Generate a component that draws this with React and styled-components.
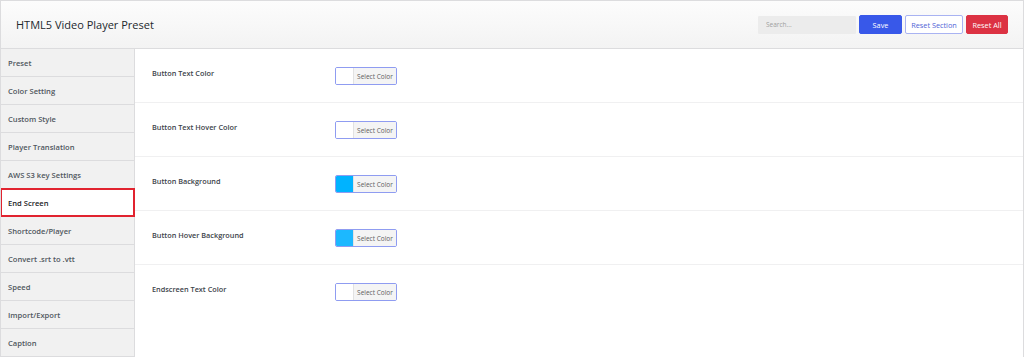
import React from 'react';
import styled, { createGlobalStyle } from 'styled-components';

const GlobalStyle = createGlobalStyle`
  html, body {
    margin: 0;
    padding: 0;
    background: #fff;
  }
  body {
    font-family: 'Open Sans', 'Noto Sans', sans-serif;
    color: #333;
  }
`;

const Frame = styled.div`
  width: 1024px;
  height: 357px;
  box-sizing: border-box;
  border: 1px solid #dcdcde;
  border-bottom: none;
  overflow: hidden;
  display: flex;
  flex-direction: column;
`;

const Header = styled.header`
  height: 47px;
  flex-shrink: 0;
  display: flex;
  align-items: center;
  justify-content: space-between;
  padding: 0 15px 0 15px;
  background: linear-gradient(#fcfcfc, #f3f3f3);
  border-bottom: 1px solid #dcdcde;
`;

const Title = styled.h1`
  margin: 0;
  font-size: 11px;
  font-weight: 400;
  color: #23282d;
`;

const Actions = styled.div`
  display: flex;
  align-items: center;
  gap: 3px;
`;

const Search = styled.input`
  width: 98px;
  height: 18px;
  box-sizing: border-box;
  border: none;
  background: #ececec;
  font-family: inherit;
  font-size: 6.5px;
  padding: 0 8px;
  border-radius: 1px;
  &::placeholder {
    color: #a0a0a0;
  }
`;

const Button = styled.button`
  height: 19px;
  width: ${(p) => p.$w}px;
  box-sizing: border-box;
  padding: 0;
  font-family: inherit;
  font-size: 7.3px;
  border-radius: 2px;
  cursor: pointer;
  background: ${(p) => p.$bg};
  color: ${(p) => p.$color};
  border: 1px solid ${(p) => p.$border};
`;

const Body = styled.div`
  flex: 1;
  display: flex;
  min-height: 0;
`;

const Sidebar = styled.nav`
  width: 133px;
  flex-shrink: 0;
  background: #f1f1f1;
  border-right: 1px solid #dcdcde;
`;

const NavItem = styled.div`
  height: 28px;
  box-sizing: border-box;
  display: flex;
  align-items: center;
  padding-left: 7px;
  font-size: 7.6px;
  font-weight: 600;
  color: #50575e;
  border-bottom: 1px solid #dcdcde;
`;

const ActiveItem = styled(NavItem)`
  position: relative;
  z-index: 1;
  width: 135px;
  height: 29px;
  margin: -1px 0 0 -1px;
  padding-left: 6px;
  color: #1d2327;
  background: #fff;
  border: 2px solid #e1232f;
`;

const Content = styled.main`
  flex: 1;
  background: #fff;
`;

const Row = styled.div`
  height: 54px;
  box-sizing: border-box;
  display: flex;
  align-items: flex-start;
  padding: 18px 0 0 17px;
  border-bottom: 1px solid #f0f0f1;
  &:last-child {
    border-bottom: none;
  }
`;

const Label = styled.div`
  width: 183px;
  font-size: 7.3px;
  font-weight: 600;
  color: #3c434a;
  line-height: 11px;
  margin-top: 1px;
`;

const Picker = styled.div`
  display: flex;
  width: 62px;
  height: 18px;
  box-sizing: border-box;
  border: 1px solid #8f9cf1;
  border-radius: 2px;
  overflow: hidden;
`;

const Swatch = styled.span`
  width: 17px;
  background: ${(p) => p.$color || '#fff'};
`;

const PickerText = styled.span`
  flex: 1;
  display: flex;
  align-items: center;
  justify-content: center;
  background: #f4f4f4;
  border-left: 1px solid #e2e2e2;
  font-size: 6.5px;
  color: #606060;
`;

const navItems = [
  'Preset',
  'Color Setting',
  'Custom Style',
  'Player Translation',
  'AWS S3 key Settings',
  'End Screen',
  'Shortcode/Player',
  'Convert .srt to .vtt',
  'Speed',
  'Import/Export',
  'Caption',
];

const fields = [
  { label: 'Button Text Color' },
  { label: 'Button Text Hover Color' },
  { label: 'Button Background', color: '#00b3ff' },
  { label: 'Button Hover Background', color: '#1cb8ff' },
  { label: 'Endscreen Text Color' },
];

export default function App() {
  return (
    <>
      <GlobalStyle />
      <Frame>
        <Header>
          <Title>HTML5 Video Player Preset</Title>
          <Actions>
            <Search placeholder="Search..." />
            <Button $w={43} $bg="#3858e9" $color="#fff" $border="#3858e9">
              Save
            </Button>
            <Button $w={58} $bg="#fff" $color="#4f63d6" $border="#a9b3f2">
              Reset Section
            </Button>
            <Button $w={42} $bg="#dc3243" $color="#fff" $border="#dc3243">
              Reset All
            </Button>
          </Actions>
        </Header>
        <Body>
          <Sidebar>
            {navItems.map((item) =>
              item === 'End Screen' ? (
                <ActiveItem key={item}>{item}</ActiveItem>
              ) : (
                <NavItem key={item}>{item}</NavItem>
              )
            )}
          </Sidebar>
          <Content>
            {fields.map((f) => (
              <Row key={f.label}>
                <Label>{f.label}</Label>
                <Picker>
                  <Swatch $color={f.color} />
                  <PickerText>Select Color</PickerText>
                </Picker>
              </Row>
            ))}
          </Content>
        </Body>
      </Frame>
    </>
  );
}
